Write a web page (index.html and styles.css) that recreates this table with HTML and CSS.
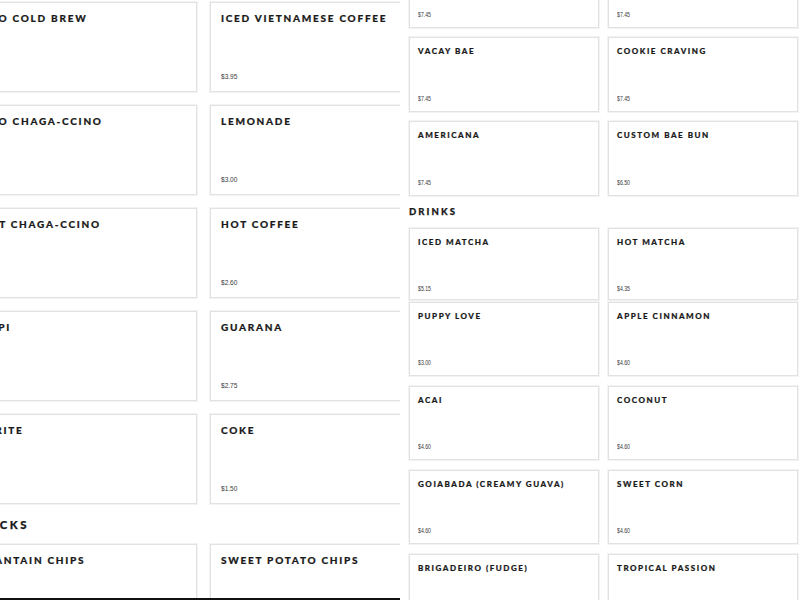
FILE: index.html
```html
<!DOCTYPE html>
<html lang="en">
<head>
<meta charset="utf-8">
<title>Menu</title>
<link rel="stylesheet" href="styles.css">
</head>
<body>
<div class="screen">
  <section class="pane pane--large">
    <div class="grid grid--large">
      <div class="card card--large"><h3 class="title">DUO COLD BREW</h3></div>
      <div class="card card--large"><h3 class="title">ICED VIETNAMESE COFFEE</h3><p class="price">$3.95</p></div>
      <div class="card card--large"><h3 class="title">DUO CHAGA-CCINO</h3></div>
      <div class="card card--large"><h3 class="title">LEMONADE</h3><p class="price">$3.00</p></div>
      <div class="card card--large"><h3 class="title">HOT CHAGA-CCINO</h3></div>
      <div class="card card--large"><h3 class="title">HOT COFFEE</h3><p class="price">$2.60</p></div>
      <div class="card card--large"><h3 class="title">KOPI</h3></div>
      <div class="card card--large"><h3 class="title">GUARANA</h3><p class="price">$2.75</p></div>
      <div class="card card--large"><h3 class="title">SPRITE</h3></div>
      <div class="card card--large"><h3 class="title">COKE</h3><p class="price">$1.50</p></div>
    </div>
    <h2 class="heading heading--large">SNACKS</h2>
    <div class="grid grid--large">
      <div class="card card--large"><h3 class="title">PLANTAIN CHIPS</h3></div>
      <div class="card card--large"><h3 class="title">SWEET POTATO CHIPS</h3></div>
    </div>
  </section>

  <section class="pane pane--small">
    <div class="rows rows--top">
      <div class="row">
        <div class="card card--small"><p class="price">$7.45</p></div>
        <div class="card card--small"><p class="price">$7.45</p></div>
      </div>
      <div class="row">
        <div class="card card--small"><h3 class="title">VACAY BAE</h3><p class="price">$7.45</p></div>
        <div class="card card--small"><h3 class="title">COOKIE CRAVING</h3><p class="price">$7.45</p></div>
      </div>
      <div class="row">
        <div class="card card--small"><h3 class="title">AMERICANA</h3><p class="price">$7.45</p></div>
        <div class="card card--small"><h3 class="title">CUSTOM BAE BUN</h3><p class="price">$6.50</p></div>
      </div>
    </div>
    <h2 class="heading heading--small">DRINKS</h2>
    <div class="rows">
      <div class="row row--tight">
        <div class="card card--small card--short"><h3 class="title">ICED MATCHA</h3><p class="price">$5.15</p></div>
        <div class="card card--small card--short"><h3 class="title">HOT MATCHA</h3><p class="price">$4.35</p></div>
      </div>
      <div class="row">
        <div class="card card--small card--drink"><h3 class="title">PUPPY LOVE</h3><p class="price">$3.00</p></div>
        <div class="card card--small card--drink"><h3 class="title">APPLE CINNAMON</h3><p class="price">$4.60</p></div>
      </div>
      <div class="row">
        <div class="card card--small card--drink"><h3 class="title">ACAI</h3><p class="price">$4.60</p></div>
        <div class="card card--small card--drink"><h3 class="title">COCONUT</h3><p class="price">$4.60</p></div>
      </div>
      <div class="row">
        <div class="card card--small card--drink"><h3 class="title">GOIABADA (CREAMY GUAVA)</h3><p class="price">$4.60</p></div>
        <div class="card card--small card--drink"><h3 class="title">SWEET CORN</h3><p class="price">$4.60</p></div>
      </div>
      <div class="row">
        <div class="card card--small card--drink"><h3 class="title">BRIGADEIRO (FUDGE)</h3></div>
        <div class="card card--small card--drink"><h3 class="title">TROPICAL PASSION</h3></div>
      </div>
    </div>
  </section>
</div>
</body>
</html>
```

FILE: styles.css
```css
html, body {
  margin: 0;
  padding: 0;
  background: #ffffff;
}

.screen {
  display: flex;
  width: 800px;
  height: 600px;
  overflow: hidden;
}

.pane {
  width: 400px;
  height: 600px;
  overflow: hidden;
  box-sizing: border-box;
  flex: none;
  background: #ffffff;
}

.pane--large {
  padding-top: 2px;
  border-bottom: 2px solid #111111;
}

.pane--small {
  padding-left: 9px;
}

.card {
  box-sizing: border-box;
  display: flex;
  flex-direction: column;
  align-items: flex-start;
  border: 1px solid #e2e2e2;
  box-shadow: 0 0 0 1px #f3f3f3;
  background: #ffffff;
}

.title {
  margin: 0;
  font-family: "Lato", "DejaVu Sans", sans-serif;
  font-weight: 900;
  color: #1a1a1a;
  white-space: nowrap;
  -webkit-text-stroke: 0.2px #1a1a1a;
}

.price {
  margin: 0;
  margin-top: auto;
  font-family: "Liberation Sans", "Arial", sans-serif;
  color: #3a3a3a;
  white-space: nowrap;
  transform: scaleX(0.82);
  transform-origin: left center;
}

.heading {
  margin: 0;
  font-family: "Lato", "DejaVu Sans", sans-serif;
  font-weight: 900;
  color: #1a1a1a;
  white-space: nowrap;
  -webkit-text-stroke: 0.25px #1a1a1a;
}

/* large (left) pane */
.grid--large {
  display: grid;
  grid-template-columns: 228px 228px;
  gap: 13px;
  margin-left: -31px;
}

.card--large {
  height: 90px;
  padding: 9px 10px 9px;
}

.card--large .title {
  font-size: 10px;
  line-height: 12px;
  letter-spacing: 1.75px;
}

.card--large .price {
  font-size: 8px;
  line-height: 10px;
}

.heading--large {
  margin-left: -31px;
  padding: 14px 0 12px;
  font-size: 11.4px;
  line-height: 14px;
  letter-spacing: 2.6px;
}

/* small (right) pane */
.rows {
  display: flex;
  flex-direction: column;
  gap: 10px;
}

.rows--top {
  margin-top: -47px;
  gap: 9px;
}

.row {
  display: grid;
  grid-template-columns: 190px 190px;
  column-gap: 9px;
}

.row--tight {
  margin-bottom: -8px;
}

.card--small {
  height: 75px;
  padding: 8px 8px 8px;
}

.card--drink {
  height: 74px;
}

.card--short {
  height: 72px;
  padding-bottom: 6px;
}

.card--small .title {
  font-size: 8px;
  line-height: 10px;
  letter-spacing: 1.55px;
  -webkit-text-stroke: 0.2px #1a1a1a;
}

.card--small .price {
  font-size: 6.5px;
  line-height: 8px;
  transform: scaleX(0.8);
}

.heading--small {
  padding: 10px 0 10px;
  font-size: 9.5px;
  line-height: 12px;
  letter-spacing: 2.1px;
}
```
